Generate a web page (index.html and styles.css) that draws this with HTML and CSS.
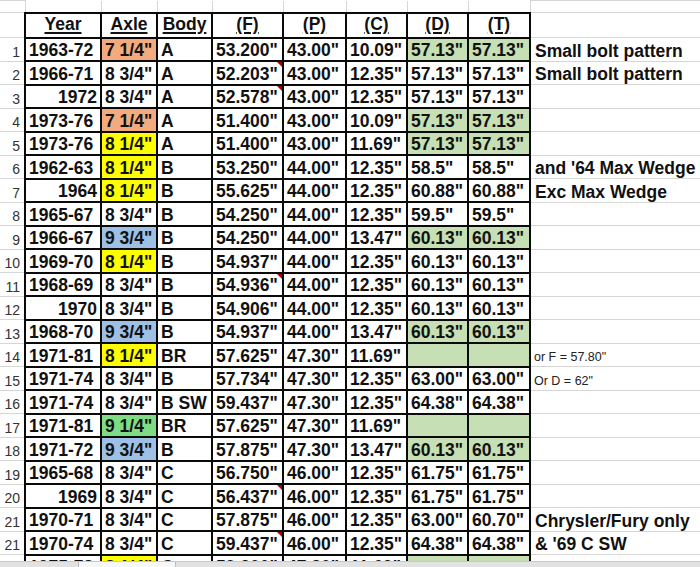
FILE: index.html
```html
<!DOCTYPE html>
<html lang="en">
<head>
<meta charset="utf-8">
<title>Axle widths</title>
<link rel="stylesheet" href="styles.css">
</head>
<body>
<div class="sheet">
  <div class="grid-area">
    <table class="grid">
      <colgroup>
        <col class="w-n"><col class="w-year"><col class="w-axle"><col class="w-body"><col class="w-f"><col class="w-p"><col class="w-c"><col class="w-d"><col class="w-t"><col class="w-note">
      </colgroup>
      <tr class="blank">
        <td class="n"></td><td class="g"></td><td class="g"></td><td class="g"></td><td class="g"></td><td class="g"></td><td class="g"></td><td class="g"></td><td class="g"></td><td class="note"></td>
      </tr>
      <tr class="head">
        <td class="n"></td>
        <td class="c h"><u>Year</u></td>
        <td class="c h"><u>Axle</u></td>
        <td class="c h"><u>Body</u></td>
        <td class="c h"><u>(F)</u></td>
        <td class="c h"><u>(P)</u></td>
        <td class="c h"><u>(C)</u></td>
        <td class="c h"><u>(D)</u></td>
        <td class="c h"><u>(T)</u></td>
        <td class="note"></td>
      </tr>
      <tr><td class="n">1</td><td class="c">1963-72</td><td class="c or">7 1/4"</td><td class="c">A</td><td class="c">53.200"</td><td class="c">43.00"</td><td class="c">10.09"</td><td class="c lg">57.13"</td><td class="c lg">57.13"</td><td class="note">Small bolt pattern</td></tr>
      <tr><td class="n">2</td><td class="c">1966-71</td><td class="c">8 3/4"</td><td class="c">A</td><td class="c cm">52.203"<span class="tri"></span></td><td class="c">43.00"</td><td class="c">12.35"</td><td class="c">57.13"</td><td class="c">57.13"</td><td class="note">Small bolt pattern</td></tr>
      <tr><td class="n">3</td><td class="c r">1972</td><td class="c">8 3/4"</td><td class="c">A</td><td class="c cm">52.578"<span class="tri"></span></td><td class="c">43.00"</td><td class="c">12.35"</td><td class="c">57.13"</td><td class="c">57.13"</td><td class="note"></td></tr>
      <tr><td class="n">4</td><td class="c">1973-76</td><td class="c or">7 1/4"</td><td class="c">A</td><td class="c">51.400"</td><td class="c">43.00"</td><td class="c">10.09"</td><td class="c lg">57.13"</td><td class="c lg">57.13"</td><td class="note"></td></tr>
      <tr><td class="n">5</td><td class="c">1973-76</td><td class="c ye">8 1/4"</td><td class="c">A</td><td class="c">51.400"</td><td class="c">43.00"</td><td class="c">11.69"</td><td class="c lg">57.13"</td><td class="c lg">57.13"</td><td class="note"></td></tr>
      <tr><td class="n">6</td><td class="c">1962-63</td><td class="c ye">8 1/4"</td><td class="c">B</td><td class="c">53.250"</td><td class="c">44.00"</td><td class="c">12.35"</td><td class="c">58.5"</td><td class="c">58.5"</td><td class="note">and '64 Max Wedge</td></tr>
      <tr><td class="n">7</td><td class="c r">1964</td><td class="c ye">8 1/4"</td><td class="c">B</td><td class="c">55.625"</td><td class="c">44.00"</td><td class="c">12.35"</td><td class="c">60.88"</td><td class="c">60.88"</td><td class="note">Exc Max Wedge</td></tr>
      <tr><td class="n">8</td><td class="c">1965-67</td><td class="c">8 3/4"</td><td class="c">B</td><td class="c">54.250"</td><td class="c">44.00"</td><td class="c">12.35"</td><td class="c">59.5"</td><td class="c">59.5"</td><td class="note"></td></tr>
      <tr><td class="n">9</td><td class="c">1966-67</td><td class="c bl">9 3/4"</td><td class="c">B</td><td class="c">54.250"</td><td class="c">44.00"</td><td class="c">13.47"</td><td class="c lg">60.13"</td><td class="c lg">60.13"</td><td class="note"></td></tr>
      <tr><td class="n">10</td><td class="c">1969-70</td><td class="c ye">8 1/4"</td><td class="c">B</td><td class="c">54.937"</td><td class="c">44.00"</td><td class="c">12.35"</td><td class="c">60.13"</td><td class="c">60.13"</td><td class="note"></td></tr>
      <tr><td class="n">11</td><td class="c">1968-69</td><td class="c">8 3/4"</td><td class="c">B</td><td class="c cm">54.936"<span class="tri"></span></td><td class="c">44.00"</td><td class="c">12.35"</td><td class="c">60.13"</td><td class="c">60.13"</td><td class="note"></td></tr>
      <tr><td class="n">12</td><td class="c r">1970</td><td class="c">8 3/4"</td><td class="c">B</td><td class="c">54.906"</td><td class="c">44.00"</td><td class="c">12.35"</td><td class="c">60.13"</td><td class="c">60.13"</td><td class="note"></td></tr>
      <tr><td class="n">13</td><td class="c">1968-70</td><td class="c bl">9 3/4"</td><td class="c">B</td><td class="c">54.937"</td><td class="c">44.00"</td><td class="c">13.47"</td><td class="c lg">60.13"</td><td class="c lg">60.13"</td><td class="note"></td></tr>
      <tr><td class="n">14</td><td class="c">1971-81</td><td class="c ye">8 1/4"</td><td class="c">BR</td><td class="c">57.625"</td><td class="c">47.30"</td><td class="c">11.69"</td><td class="c lg"></td><td class="c lg"></td><td class="note sm">or F = 57.80"</td></tr>
      <tr><td class="n">15</td><td class="c">1971-74</td><td class="c">8 3/4"</td><td class="c">B</td><td class="c">57.734"</td><td class="c">47.30"</td><td class="c">12.35"</td><td class="c">63.00"</td><td class="c">63.00"</td><td class="note sm">Or D = 62"</td></tr>
      <tr><td class="n">16</td><td class="c">1971-74</td><td class="c">8 3/4"</td><td class="c">B SW</td><td class="c">59.437"</td><td class="c">47.30"</td><td class="c">12.35"</td><td class="c">64.38"</td><td class="c">64.38"</td><td class="note"></td></tr>
      <tr><td class="n">17</td><td class="c">1971-81</td><td class="c gr">9 1/4"</td><td class="c">BR</td><td class="c">57.625"</td><td class="c">47.30"</td><td class="c">11.69"</td><td class="c lg"></td><td class="c lg"></td><td class="note"></td></tr>
      <tr><td class="n">18</td><td class="c">1971-72</td><td class="c bl">9 3/4"</td><td class="c">B</td><td class="c">57.875"</td><td class="c">47.30"</td><td class="c">13.47"</td><td class="c lg">60.13"</td><td class="c lg">60.13"</td><td class="note"></td></tr>
      <tr><td class="n">19</td><td class="c">1965-68</td><td class="c">8 3/4"</td><td class="c">C</td><td class="c">56.750"</td><td class="c">46.00"</td><td class="c">12.35"</td><td class="c">61.75"</td><td class="c">61.75"</td><td class="note"></td></tr>
      <tr><td class="n">20</td><td class="c r">1969</td><td class="c">8 3/4"</td><td class="c">C</td><td class="c cm">56.437"<span class="tri"></span></td><td class="c">46.00"</td><td class="c">12.35"</td><td class="c">61.75"</td><td class="c">61.75"</td><td class="note"></td></tr>
      <tr><td class="n">21</td><td class="c">1970-71</td><td class="c">8 3/4"</td><td class="c">C</td><td class="c">57.875"</td><td class="c">46.00"</td><td class="c">12.35"</td><td class="c">63.00"</td><td class="c">60.70"</td><td class="note">Chrysler/Fury only</td></tr>
      <tr><td class="n">21</td><td class="c">1970-74</td><td class="c">8 3/4"</td><td class="c">C</td><td class="c cm">59.437"<span class="tri"></span></td><td class="c">46.00"</td><td class="c">12.35"</td><td class="c">64.38"</td><td class="c">64.38"</td><td class="note">&amp; '69 C SW</td></tr>
      <tr><td class="n">22</td><td class="c">1975-78</td><td class="c ye">8 1/4"</td><td class="c">C</td><td class="c">59.200"</td><td class="c">47.30"</td><td class="c">11.69"</td><td class="c lg"></td><td class="c lg"></td><td class="note"></td></tr>
    </table>
  </div>
  <div class="tabbar">
    <div class="tab-left"></div>
    <div class="tab-active"></div>
    <div class="tab-rest"></div>
  </div>
</div>
</body>
</html>
```
FILE: styles.css
```css
html, body {
  margin: 0;
  padding: 0;
  background: #ffffff;
}

.sheet {
  width: 700px;
  height: 567px;
  display: flex;
  flex-direction: column;
  overflow: hidden;
}

.grid-area {
  flex: 1;
  overflow: hidden;
}

.grid {
  border-collapse: collapse;
  table-layout: fixed;
  width: 700px;
  font-family: "Liberation Sans", Arial, sans-serif;
  color: #111111;
}

.w-n { width: 25px; }
.w-year { width: 76px; }
.w-axle { width: 56px; }
.w-body { width: 55px; }
.w-f { width: 71px; }
.w-p { width: 63px; }
.w-c { width: 61px; }
.w-d { width: 61px; }
.w-t { width: 62px; }
.w-note { width: 170px; }

.grid tr { height: 23.5px; }
.grid tr.blank { height: 12px; }
.grid tr.head { height: 23px; }

.grid td {
  padding: 0;
  vertical-align: bottom;
  white-space: nowrap;
  overflow: hidden;
  border: 1px solid #d6d6d6;
}

.grid td.g {
  border-top: none;
}

.grid td.c {
  border: 2px solid #0a0a0a;
  font-weight: bold;
  font-size: 17.5px;
  line-height: 20px;
  padding-left: 3px;
  background: #ffffff;
  position: relative;
}

.grid td.r {
  text-align: right;
  padding-left: 0;
  padding-right: 3px;
}

.grid td.h {
  text-align: center;
  padding: 0 0 3px 0;
}

.grid td.h u {
  text-decoration-thickness: 1.5px;
  text-underline-offset: 2px;
}

.grid td.n {
  font-size: 14px;
  line-height: 16px;
  text-align: right;
  padding-right: 4px;
  padding-bottom: 1px;
  color: #333333;
  border-left: none;
}

.grid td.note {
  font-weight: bold;
  font-size: 17.5px;
  line-height: 20px;
  padding-left: 4px;
  border-right: none;
}

.grid td.note.sm {
  font-weight: normal;
  font-size: 12.5px;
  line-height: 18px;
  padding-left: 3px;
  color: #222222;
}

.grid td.or { background: #f2aa7e; }
.grid td.ye { background: #ffff00; }
.grid td.bl { background: #9dc0e4; }
.grid td.gr { background: #80dc84; }
.grid td.lg { background: #c6dfb4; }

.tri {
  position: absolute;
  top: 0;
  right: 0;
  width: 0;
  height: 0;
  border-top: 5px solid #b00000;
  border-left: 5px solid transparent;
}

.tabbar {
  height: 5px;
  flex: none;
  display: flex;
  background: #e2e2e2;
  border-top: 1px solid #c8c8c8;
}

.tab-left {
  width: 78px;
}

.tab-active {
  width: 96px;
  background: #f7f7f7;
  border-left: 1px solid #bdbdbd;
  border-right: 1px solid #bdbdbd;
}

.tab-rest {
  flex: 1;
}
```
